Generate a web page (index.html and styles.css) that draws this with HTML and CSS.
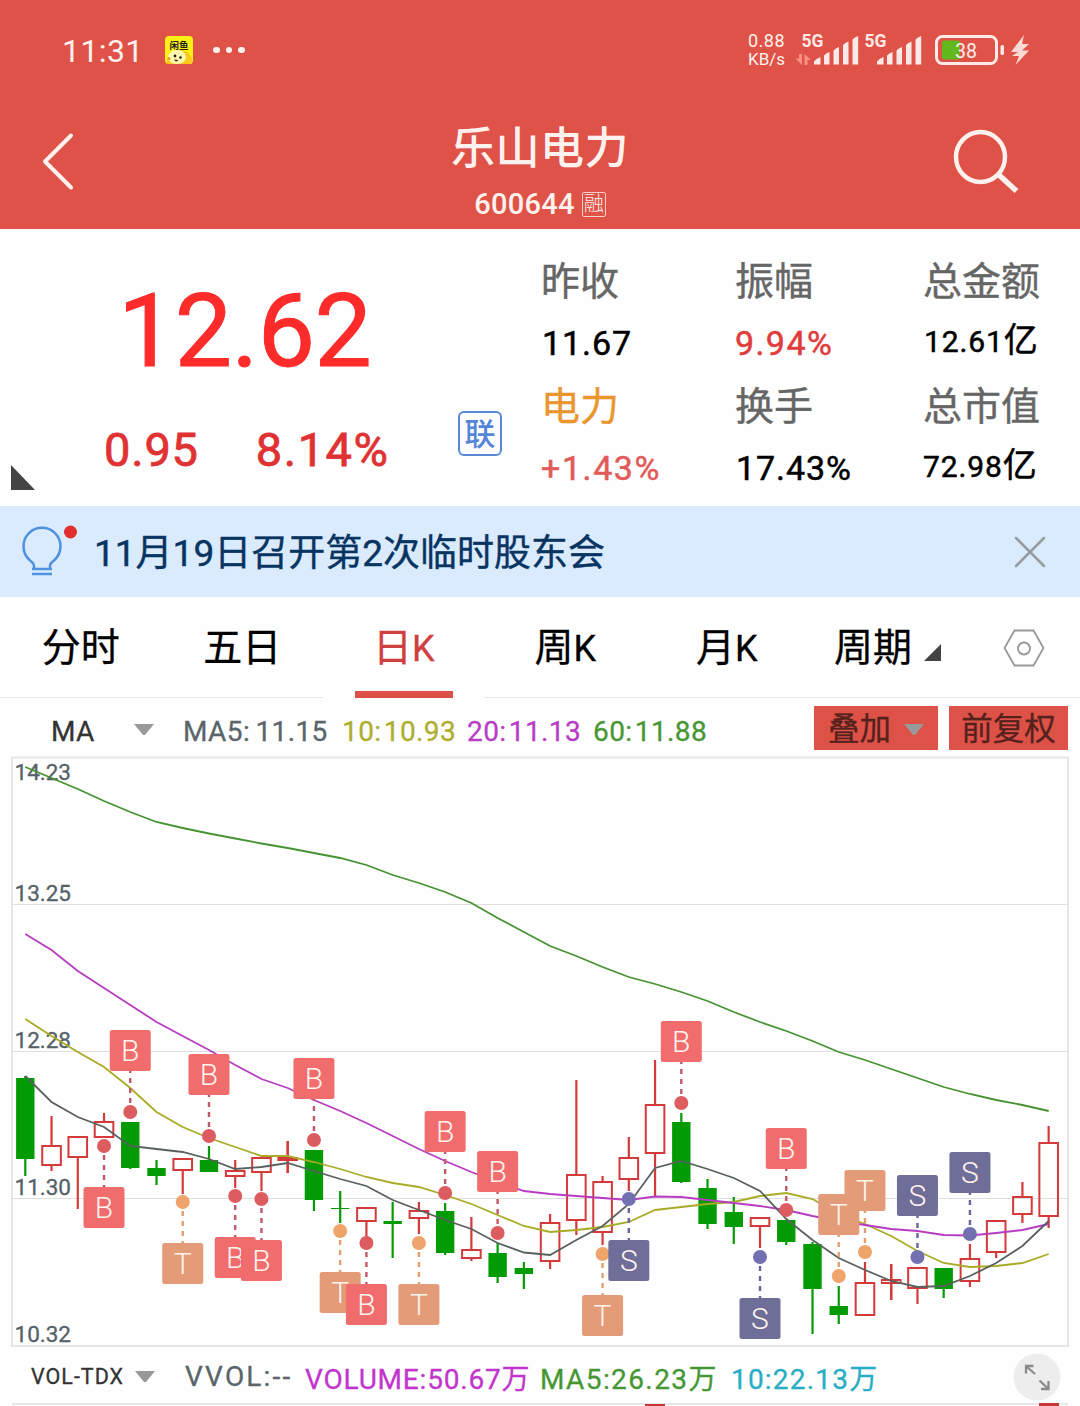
FILE: index.html
```
<!DOCTYPE html>
<html lang="zh-CN">
<head>
  <meta charset="UTF-8">
  <meta name="viewport" content="width=device-width, initial-scale=1.0">
  <title>乐山电力 600644</title>
  <link rel="stylesheet" href="styles.css">
</head>
<body>
  <header class="header">
    <div class="status">
      <span class="clock">11:31</span>
      <svg class="app-icon" width="28" height="28" viewBox="0 0 28 28">
        <rect width="28" height="28" rx="4" fill="#fdf014"/>
        <path d="M2 28V23Q4 15 13 14Q25 14 27 23V28Z" fill="#fbc91c"/>
        <ellipse cx="12" cy="21" rx="9" ry="7" fill="#fff9b0"/>
        <text x="14" y="12.5" text-anchor="middle" class="app-name">闲鱼</text>
        <circle cx="10" cy="20" r="1.4" fill="#222"/>
        <circle cx="15.5" cy="21.5" r="1.3" fill="#222"/>
        <path d="M9 23.5q2 3.5 4.5 .5z" fill="#5a1a10"/>
        <circle cx="4" cy="22.5" r="1.5" fill="#f59a2c"/>
      </svg>
      <span class="dots"><i></i><i></i><i></i></span>
      <div class="status-right">
        <div class="speed"><span>0.88</span><span class="unit">KB/s</span></div>
        <svg width="245" height="40" viewBox="790 30 245 40">
          <g fill="#ffe9e6">
            <text x="801.5" y="47" class="net">5G</text>
            <text x="864.5" y="47" class="net">5G</text>
            <path id="bars" d="M814 64.500v-3q2-3 6.500-4.500v7.500zM824 64.500v-9q2-2.500 5.500-3.500v12.500zM833.500 64.500v-14q2-2.500 5.500-3.500v17.500zM843 64.500v-19.500q2-2.500 5.500-3.500v23zM852.500 64.500v-25q2-2.500 5.700-3.500v28.500z"/>
            <use href="#bars" x="63"/>
            <rect x="1000.5" y="45" width="3.5" height="10" rx="1.5"/>
          </g>
          <path d="M802 54v11l-6.500-6.500h3.500v-4.500zM804.500 65v-11l6.500 6h-3.500v5z" fill="#ff8f86"/>
          <rect x="936.5" y="36.5" width="60" height="27" rx="6" fill="none" stroke="#ffe9e6" stroke-width="3"/>
          <rect x="942" y="40.5" width="18" height="19" rx="2" fill="#62b81c"/>
          <text x="955" y="57.5" class="bat">38</text>
          <path d="M1024 35L1011 52H1018L1012 56H1019L1015.500 65L1029 50.500H1022L1029 44H1022Z" fill="#ffd9d5"/>
        </svg>
      </div>
    </div>
    <div class="nav">
      <svg class="back" width="34" height="60" viewBox="0 0 34 60"><path d="M30 4.500L4 30.500L30 56.500" fill="none" stroke="#fff1ee" stroke-width="4" stroke-linecap="round" stroke-linejoin="round"/></svg>
      <div class="title">
        <h1>乐山电力</h1>
        <p>600644<span class="margin-tag">融</span></p>
      </div>
      <svg class="search" width="68" height="68" viewBox="0 0 68 68"><ellipse cx="29.5" cy="30" rx="24.500" ry="25" fill="none" stroke="#fff1ee" stroke-width="4.5"/><path d="M47.500 47.500L65.500 64" stroke="#fff1ee" stroke-width="5.5"/></svg>
    </div>
  </header>

  <section class="quote">
    <div class="price">
      <div class="last">12.62</div>
      <div class="change"><span>0.95</span><span>8.14%</span></div>
      <span class="link-tag">联</span>
      <i class="corner"></i>
    </div>
    <dl class="stats">
      <div><dt>昨收</dt><dd class="in">11.67</dd><dt class="orange">电力</dt><dd class="soft">+1.43%</dd></div>
      <div><dt>振幅</dt><dd class="red">9.94%</dd><dt>换手</dt><dd class="in">17.43%</dd></div>
      <div class="total"><dt>总金额</dt><dd class="in">12.61<b>亿</b></dd><dt>总市值</dt><dd>72.98<b>亿</b></dd></div>
    </dl>
  </section>

  <section class="notice">
    <svg width="60" height="60" viewBox="18 521.5 60 60">
      <path d="M34 564.500V568.500H50V564.500Q51 562 54.500 559.500A18.500 18.500 0 1 0 29.500 559.500Q33 562 34 564.500M32 573.500H52M32 568.500H52" fill="none" stroke="#4f93e0" stroke-width="2.5"/>
      <circle cx="70.5" cy="531.5" r="6.5" fill="#e12f2f"/>
    </svg>
    <p>11月19日召开第2次临时股东会</p>
    <svg class="close" width="32" height="32" viewBox="0 0 32 32"><path d="M2 2L30 30M30 2L2 30" stroke="#949c9f" stroke-width="2.5" stroke-linecap="round"/></svg>
  </section>

  <nav class="tabs">
    <a>分时</a>
    <a>五日</a>
    <a class="active">日<i>K</i></a>
    <a>周<i>K</i></a>
    <a>月<i>K</i></a>
    <a class="period">周期<svg width="17" height="17" viewBox="0 0 17 17"><path d="M17 0V17H0Z" fill="#444"/></svg></a>
    <svg class="setting" width="42" height="38" viewBox="0 0 42 38"><path d="M11.500 1.500H30.500L40.500 19L30.500 36.500H11.500L1.500 19Z" fill="none" stroke="#999" stroke-width="1.8"/><circle cx="21" cy="19.5" r="6" fill="none" stroke="#999" stroke-width="1.8"/></svg>
  </nav>

  <div class="tools">
    <span class="ma">MA</span>
    <i class="arrow"></i>
    <span class="ma5">MA5: 11.15</span>
    <span class="ma10">10: 10.93</span>
    <span class="ma20">20: 11.13</span>
    <span class="ma60">60: 11.88</span>
    <button class="overlay">叠加<i class="arrow"></i></button>
    <button class="adjust">前复权</button>
  </div>

  <svg id="chart" class="chart" width="1080" height="600" viewBox="0 750 1080 600"></svg>

  <footer class="volume">
    <span class="vol-name">VOL-TDX</span>
    <i class="arrow"></i>
    <span class="vvol">VVOL:--</span>
    <span class="vol">VOLUME:50.67万</span>
    <span class="vol5">MA5:26.23万</span>
    <span class="vol10">10:22.13万</span>
    <svg class="expand" width="48" height="48" viewBox="0 0 48 48"><circle cx="24" cy="24" r="23.5" fill="#ededed"/><path d="M13 20.500V13H20.500M13 13L22 21M35.500 28V36H28M35.500 36L26.500 27.500" fill="none" stroke="#8b8b8b" stroke-width="2.3"/></svg>
  </footer>
  <div class="vol-chart"><i></i><i class="hollow"></i></div>

  <script src="chart.js"></script>
</body>
</html>
```
FILE: styles.css
```
* {
  box-sizing: border-box;
  margin: 0;
  padding: 0;
}
body {
  width: 1080px;
  height: 1406px;
  overflow: hidden;
  background: #fefefe;
  font-family: Roboto, "Noto Sans CJK SC", sans-serif;
  color: #000;
}
i, b {
  font-style: normal;
  font-weight: normal;
}
span, a, p, dt, dd {
  white-space: nowrap;
}

/* header */
.header {
  height: 229px;
  background: #df5247;
  color: #fff1ee;
}
.status {
  display: flex;
  align-items: center;
  height: 100px;
  padding-left: 62px;
}
.clock {
  width: 103px;
  font-size: 32px;
  letter-spacing: .4px;
  line-height: 100px;
  padding-top: 2px;
}
.app-name {
  font-size: 9.5px;
  font-weight: bold;
  fill: #222;
}
.dots {
  display: flex;
  gap: 6px;
  margin-left: 20px;
}
.dots i {
  width: 6.5px;
  height: 6.5px;
  border-radius: 50%;
  background: #fff1ee;
}
.status-right {
  display: flex;
  align-items: center;
  margin-left: auto;
  padding-right: 45px;
}
.speed {
  display: flex;
  flex-direction: column;
  width: 43px;
  padding-left: 1px;
  font-size: 18px;
  line-height: 18px;
  letter-spacing: .5px;
}
.speed .unit {
  font-size: 17px;
  letter-spacing: 0;
}
.net {
  font-size: 17.5px;
  font-weight: bold;
}
.bat {
  font-size: 19.5px;
  fill: #fff1ee;
}
.nav {
  display: grid;
  grid-template-columns: 300px 1fr 300px;
  height: 129px;
}
.back {
  margin: 31px 0 0 41px;
}
.title {
  text-align: center;
}
.title h1 {
  font-size: 44px;
  font-weight: 500;
  letter-spacing: .5px;
  line-height: 60px;
  margin-top: 19px;
}
.title p {
  display: flex;
  align-items: center;
  justify-content: center;
  height: 48px;
  padding-top: 2px;
  font-size: 29px;
  font-weight: 500;
  letter-spacing: .3px;
}
.margin-tag {
  width: 24px;
  height: 25px;
  margin-left: 7px;
  border: 1px solid #fbd0ca;
  border-radius: 2px;
  font-size: 20px;
  font-weight: 300;
  line-height: 22px;
  text-align: center;
  letter-spacing: 0;
}
.search {
  margin: 27px 0 0 171px;
}

/* quote */
.quote {
  display: flex;
  height: 277px;
}
.price {
  position: relative;
  width: 541px;
  color: #fe2b2b;
}
.last {
  padding: 42px 0 0 118px;
  font-size: 102px;
  line-height: 120px;
  letter-spacing: -.6px;
  -webkit-text-stroke: 1px #fe2b2b;
}
.change {
  display: flex;
  gap: 57px;
  padding: 29px 0 0 104px;
  color: #e03232;
  font-size: 47px;
  line-height: 60px;
  letter-spacing: .8px;
  -webkit-text-stroke: .8px #e03232;
}
.change span + span {
  letter-spacing: 1.5px;
}
.link-tag {
  position: absolute;
  left: 458px;
  top: 182px;
  width: 44px;
  height: 45px;
  border: 2px solid #5b88d6;
  border-radius: 6px;
  color: #5585d8;
  font-size: 31px;
  font-weight: 500;
  line-height: 44px;
  text-align: center;
}
.corner {
  position: absolute;
  left: 11px;
  top: 236px;
  border-top: 25px solid transparent;
  border-left: 24px solid #444;
}
.stats {
  display: grid;
  grid-template-columns: 194px 188px 157px;
  padding-top: 20px;
  font-size: 34px;
  line-height: 62.7px;
  letter-spacing: .9px;
}
.stats dt {
  height: 62.7px;
  padding-top: 2px;
  color: #666;
  font-size: 39px;
  letter-spacing: 0;
  -webkit-text-stroke: .4px currentColor;
}
.stats dd {
  height: 62.7px;
  -webkit-text-stroke: .5px currentColor;
}
.stats .in {
  padding-left: 1px;
}
.stats .orange {
  color: #ea962f;
}
.stats .red {
  color: #e03c3c;
  letter-spacing: 1.4px;
}
.stats .soft {
  color: #e25a5a;
  letter-spacing: 1.6px;
}
.stats .total dd {
  font-size: 30px;
  line-height: 60.7px;
}
.stats .total b {
  font-size: 34px;
  line-height: 0;
  letter-spacing: 0;
}

/* notice */
.notice {
  display: flex;
  align-items: center;
  height: 91px;
  padding: 0 34px 0 18px;
  background: #dbebfe;
  color: #083462;
}
.notice p {
  margin-left: 16px;
  padding-bottom: 4px;
  font-size: 37px;
  -webkit-text-stroke: .4px #083462;
}
.close {
  margin-left: auto;
}

/* tabs */
.tabs {
  display: grid;
  grid-template-columns: repeat(5, 161.5px) 160px 1fr;
  align-items: center;
  height: 101px;
  font-size: 39px;
  line-height: 101px;
  text-align: center;
  -webkit-text-stroke: .3px currentColor;
  background: linear-gradient(#e8e8e8, #e8e8e8) 0 100% / 323px 1px no-repeat, linear-gradient(#e8e8e8, #e8e8e8) 484px 100% / 596px 1px no-repeat;
}
.tabs i {
  font-size: 36px;
}
.tabs a {
  height: 101px;
  padding-top: 1px;
}
.tabs .active {
  position: relative;
  color: #cf3f3f;
}
.tabs .active::after {
  content: "";
  position: absolute;
  left: 31.5px;
  bottom: 0;
  width: 98px;
  height: 7px;
  background: #dc5048;
}
.period svg {
  margin-left: 12px;
}
.setting {
  margin-left: 35px;
}

/* indicator row */
.tools, .volume {
  display: flex;
  align-items: center;
  font-size: 28px;
  -webkit-text-stroke: .3px currentColor;
}
.tools {
  height: 52px;
  padding: 14px 12px 0 51px;
  letter-spacing: .4px;
  word-spacing: -5px;
}
.arrow {
  width: 20px;
  height: 11px;
  background: #999;
  clip-path: polygon(0 0, 100% 0, 55% 100%, 45% 100%);
}
.ma {
  width: 83px;
  color: #333;
}
.tools .ma5 {
  width: 159px;
  margin-left: 29px;
  word-spacing: -2px;
}
.ma5, .vvol {
  color: #59656a;
}
.ma10 {
  width: 125px;
  color: #aeae2e;
}
.ma20 {
  width: 126px;
  color: #b83dc6;
}
.ma60 {
  color: #489634;
}
.tools > .arrow {
  margin-top: -3px;
}
.tools button {
  display: flex;
  align-items: center;
  justify-content: center;
  height: 44px;
  border: 0;
  background: #dd5147;
  color: #54211d;
  font: 31.5px/44px Roboto, "Noto Sans CJK SC", sans-serif;
  padding-top: 3px;
  margin-top: -6px;
}
.tools .overlay {
  width: 124px;
  gap: 13px;
  margin-left: auto;
}
.tools .adjust {
  width: 119px;
  margin-left: 11px;
}

/* chart */
.chart {
  display: block;
}
.axis {
  font-size: 22.5px;
  fill: #556167;
  stroke: #556167;
  stroke-width: .3px;
}
.mark {
  font-size: 30px;
  font-weight: 300;
  fill: #fff3ee;
  text-anchor: middle;
}

/* volume row */
.volume {
  height: 53px;
  padding: 0 19px 0 31px;
}
.vol-name {
  width: 104px;
  color: #333;
  font-size: 21.5px;
  letter-spacing: 1px;
}
.vvol {
  width: 120px;
  margin-left: 30px;
  letter-spacing: 2.2px;
}
.vol {
  width: 235px;
  color: #c235cc;
  letter-spacing: .8px;
}
.vol5 {
  width: 191px;
  color: #459733;
  letter-spacing: 1.4px;
}
.vol10 {
  color: #27aec4;
  letter-spacing: 1.2px;
}
.expand {
  margin-left: auto;
}
.vol-chart {
  display: flex;
  height: 3px;
  margin: 0 12px;
  border-top: 2px solid #e6e8e8;
  padding-left: 633px;
}
.vol-chart i {
  width: 20px;
  height: 3px;
  margin-top: -1px;
  background: #c93838;
}
.vol-chart .hollow {
  margin: -2px 0 0 374px;
}
```
FILE: chart.js
```
const chart = document.getElementById('chart');
const STEP = 26.24;
const X0 = 25.3;
const xOf = i => X0 + i * STEP;

// color, body top, body bottom, high, low
const candles = [
  ['g', 1078, 1159, 1076, 1176], ['r', 1145, 1166, 1116, 1171], ['r', 1136, 1158, 1136, 1209], ['r', 1121, 1138, 1113, 1138],
  ['g', 1122, 1168, 1122, 1169], ['g', 1168, 1176, 1160, 1185], ['r', 1158, 1171, 1158, 1194], ['g', 1160, 1172, 1146, 1172],
  ['r', 1170, 1177, 1160, 1188], ['r', 1157, 1173, 1157, 1191], ['r', 1157, 1161, 1141, 1173], ['g', 1150, 1200, 1150, 1211],
  ['g', 1208, 1209, 1191, 1223], ['r', 1207, 1222, 1207, 1237], ['g', 1221, 1224, 1202, 1258], ['r', 1210, 1219, 1202, 1234],
  ['g', 1211, 1253, 1203, 1255], ['r', 1249, 1259, 1217, 1261], ['g', 1253, 1277, 1243, 1283], ['g', 1268, 1274, 1262, 1289],
  ['r', 1222, 1262, 1214, 1269], ['r', 1174, 1221, 1080, 1235], ['r', 1181, 1233, 1176, 1245], ['r', 1157, 1180, 1137, 1191],
  ['r', 1104, 1154, 1060, 1196], ['g', 1122, 1182, 1113, 1183], ['g', 1188, 1224, 1179, 1229], ['g', 1212, 1227, 1197, 1244],
  ['r', 1217, 1227, 1217, 1248], ['g', 1220, 1242, 1220, 1245], ['g', 1244, 1289, 1242, 1334], ['g', 1306, 1315, 1286, 1324],
  ['r', 1282, 1316, 1262, 1316], ['r', 1279, 1284, 1264, 1300], ['r', 1267, 1289, 1267, 1304], ['g', 1268, 1289, 1268, 1298],
  ['r', 1258, 1282, 1244, 1287], ['r', 1220, 1253, 1220, 1258], ['r', 1196, 1215, 1182, 1223], ['r', 1142, 1217, 1126, 1228]
];

const lines = {
  '#a9ab25': [1019, 1036, 1052, 1067, 1088, 1112, 1127, 1138, 1147, 1156, 1156, 1162, 1169, 1177, 1183, 1187, 1195, 1204, 1215, 1226, 1232, 1230, 1227, 1222, 1210, 1207, 1204, 1202, 1196, 1193, 1199, 1214, 1224, 1236, 1251, 1263, 1267, 1266, 1263, 1254],
  '#b83cc2': [934, 950, 971, 988, 1005, 1022, 1036, 1050, 1065, 1079, 1088, 1100, 1111, 1123, 1136, 1149, 1161, 1172, 1182, 1191, 1194, 1196, 1198, 1200, 1196.5, 1197, 1200, 1203, 1206, 1210, 1216, 1221, 1225, 1229, 1231, 1235, 1235.5, 1233, 1230, 1224],
  '#469332': [767, 778, 789, 801, 812, 822, 828, 833.5, 838.5, 843.5, 848, 853, 858, 865, 875, 883, 892, 903, 918, 932, 946, 956, 967, 977, 984, 992, 1001, 1012, 1022, 1031, 1041, 1052, 1060, 1069, 1078, 1087, 1094, 1100, 1105, 1111],
  '#59615f': [1076, 1102, 1117, 1127, 1146, 1149, 1152, 1159, 1169, 1167, 1163, 1171, 1179, 1186, 1200, 1210, 1220, 1229, 1243, 1252.5, 1255, 1240, 1226, 1204, 1168, 1161, 1169, 1178, 1191, 1219, 1240, 1258, 1270, 1281, 1287, 1286, 1276, 1263, 1246, 1221]
};

// candle index, type, dot y, direction of the label (-1 above, 1 below)
const marks = [
  [3, 'B', 1146, 1], [4, 'B', 1112, -1], [6, 'T', 1202, 1], [7, 'B', 1136, -1], [8, 'B', 1196, 1], [9, 'B', 1199, 1],
  [11, 'B', 1140, -1], [12, 'T', 1231, 1], [13, 'B', 1243, 1], [15, 'T', 1243, 1], [16, 'B', 1193, -1], [18, 'B', 1233, -1],
  [22, 'T', 1254, 1], [23, 'S', 1199, 1], [25, 'B', 1103, -1], [28, 'S', 1257, 1], [29, 'B', 1210, -1],
  [32, 'T', 1252, -1], [31, 'T', 1276, -1], [34, 'S', 1257, -1], [36, 'S', 1234, -1]
];
const markColors = {
  B: { box: '#f16d6d', dot: '#dc5c60', dash: '#c2596a' },
  T: { box: '#e39b78', dot: '#eea46a', dash: '#e39f6e' },
  S: { box: '#6f6e99', dot: '#7170b0', dash: '#66659c' }
};

let out = '<rect x="12" y="757.5" width="1056" height="588.5" fill="#fefefe" stroke="#e6e8e8" stroke-width="2"/>';

[904.5, 1051.5, 1198.5].forEach(y => {
  out += `<path d="M12 ${y}H1068" stroke="#dfdfdf"/>`;
});

candles.forEach(([c, top, bottom, high, low], i) => {
  const x = xOf(i);
  if (c === 'g') {
    out += `<path d="M${x} ${high}V${low}" stroke="#039b03" stroke-width="2.2"/>`;
    out += `<rect x="${x - 9.2}" y="${top}" width="18.4" height="${bottom - top}" fill="#039b03"/>`;
  } else {
    out += `<path d="M${x} ${high}V${top}M${x} ${bottom}V${low}" stroke="#d43a3a" stroke-width="2.2"/>`;
    out += `<rect x="${x - 9.3}" y="${top + 1}" width="18.6" height="${bottom - top - 2}" fill="none" stroke="#d43a3a" stroke-width="2"/>`;
    // bodies too thin to be hollow show the wick through
    if (bottom - top < 6) {
      out += `<path d="M${x} ${high}V${low}" stroke="#d43a3a" stroke-width="2.2"/>`;
    }
  }
});

[['14.23', 780], ['13.25', 901], ['12.28', 1048], ['11.30', 1195], ['10.32', 1342]].forEach(([t, y]) => {
  out += `<text x="14.5" y="${y}" class="axis">${t}</text>`;
});

Object.entries(lines).forEach(([color, ys]) => {
  const points = ys.map((y, i) => `${xOf(i).toFixed(1)},${y}`).join(' ');
  out += `<polyline points="${points}" fill="none" stroke="${color}" stroke-width="1.8"/>`;
});

marks.forEach(([i, type, y, dir]) => {
  const x = xOf(i);
  const cy = y + dir * 61.5;
  const c = markColors[type];
  out += `<path d="M${x} ${y + dir * 9}V${cy - dir * 20}" stroke="${c.dash}" stroke-width="2.4" stroke-dasharray="5 5"/>`;
  out += `<circle cx="${x}" cy="${y}" r="7" fill="${c.dot}"/>`;
  out += `<rect x="${x - 20.5}" y="${cy - 20.5}" width="41" height="41" rx="2.5" fill="${c.box}"/>`;
  out += `<text x="${x}" y="${cy + 10.5}" class="mark">${type}</text>`;
});

chart.innerHTML = out;
```
